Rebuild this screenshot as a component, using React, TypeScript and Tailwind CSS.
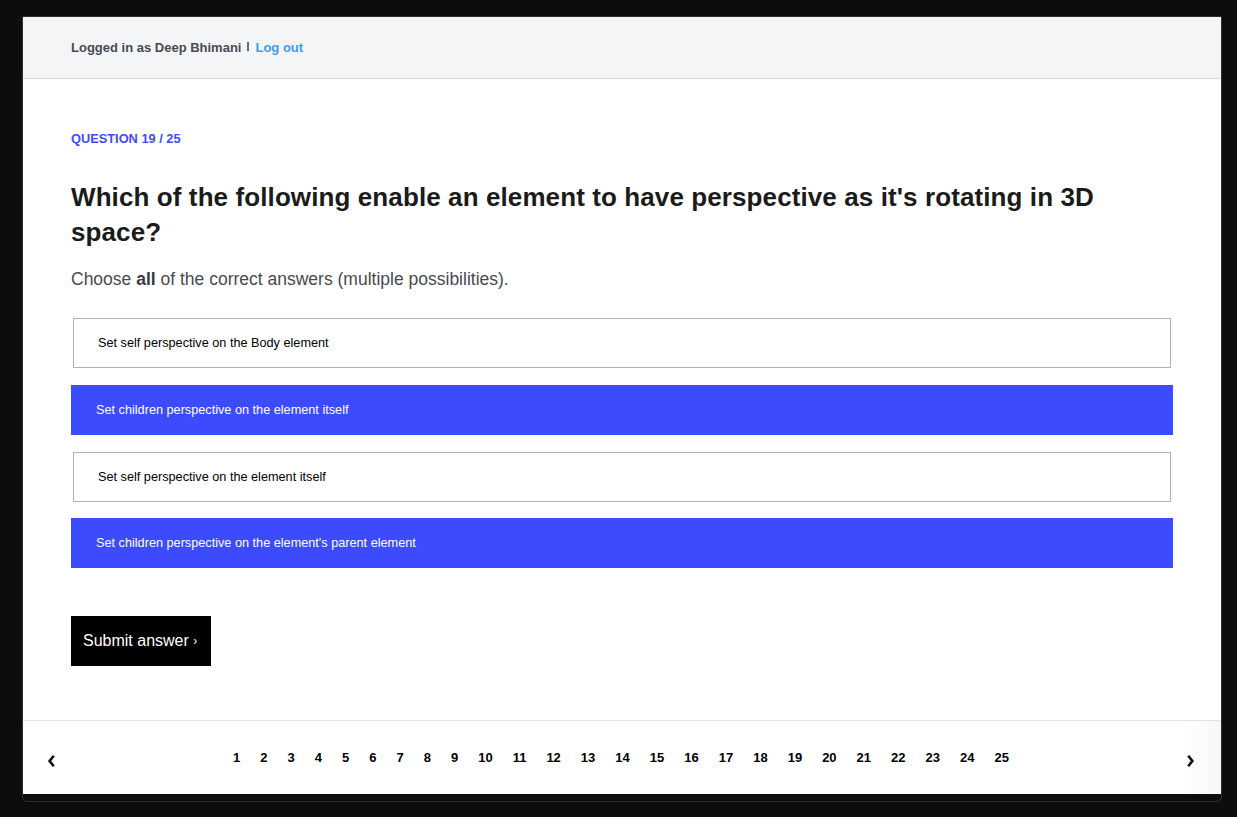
import React from "react";

const options = [
  { text: "Set self perspective on the Body element", selected: false },
  { text: "Set children perspective on the element itself", selected: true },
  { text: "Set self perspective on the element itself", selected: false },
  { text: "Set children perspective on the element's parent element", selected: true },
];

function Chevron({ dir }: { dir: "left" | "right" }) {
  return (
    <svg width="9" height="14" viewBox="0 0 9 14" fill="none">
      {dir === "left" ? (
        <path d="M6.8 1.8 L2.6 7 L6.8 12.2" stroke="#111" strokeWidth="2.6" strokeLinejoin="miter" />
      ) : (
        <path d="M2.2 1.8 L6.4 7 L2.2 12.2" stroke="#111" strokeWidth="2.6" strokeLinejoin="miter" />
      )}
    </svg>
  );
}

export default function App() {
  const nums = Array.from({ length: 25 }, (_, i) => i + 1);
  return (
    <div
      className="w-full h-[817px] bg-[#0d0d0d] pt-[16px] pl-[22px] overflow-hidden"
      style={{ fontFamily: '"Liberation Sans", Arial, sans-serif' }}
    >
      <div className="w-[1200px] border border-[#2f2f2f] rounded-b-[5px] pb-[7px] bg-[#0d0d0d]">
        <div className="bg-white">
          <header className="h-[62px] bg-[#f4f5f7] border-b border-[#d7d9dc] pl-[48px] flex items-center">
            <span className="text-[13px] font-bold text-[#4a4a52]">Logged in as Deep Bhimani</span>
            <span className="ml-[6px] mb-[3px] w-[2px] h-[9px] bg-[#6b6b72]" />
            <span className="ml-[6px] text-[13px] font-bold text-[#3b9cf6]">Log out</span>
          </header>
          <main className="pl-[48px] pr-[48px] pt-[53px] pb-[54px]">
            <div className="text-[12.8px] font-bold text-[#3d4bff] leading-[14px]">
              QUESTION 19 / 25
            </div>
            <h1 className="mt-[34px] text-[26px] font-bold leading-[35px] text-[#1b1b1b] pr-[70px] tracking-[0.1px]">
              Which of the following enable an element to have perspective as it's rotating in 3D space?
            </h1>
            <p className="mt-[17px] text-[17.5px] leading-[24px] text-[#4a4a4f]">
              Choose <b className="text-[#3a3a3f]">all</b> of the correct answers (multiple possibilities).
            </p>
            <div className="mt-[27px] flex flex-col">
              {options.map((o, i) =>
                o.selected ? (
                  <div
                    key={o.text}
                    className={`h-[50px] bg-[#3d4bff] text-white text-[12.7px] flex items-center pl-[25px] pt-[2px] ${i === 3 ? "mt-[16px]" : "mt-[17px]"}`}
                  >
                    {o.text}
                  </div>
                ) : (
                  <div
                    key={o.text}
                    className={`mx-[2px] h-[50px] border border-[#b3b3b3] bg-white text-black text-[12.7px] flex items-center pl-[24px] pt-[2px] ${i === 0 ? "mt-0" : "mt-[17px]"}`}
                  >
                    {o.text}
                  </div>
                )
              )}
            </div>
            <button className="mt-[48px] h-[50px] w-[140px] bg-black text-white text-[16px] text-left pl-[12px]">
              Submit answer <span className="text-[12px] relative top-[-1px]">›</span>
            </button>
          </main>
          <footer className="h-[74px] border-t border-[#dfe4ea] flex items-center justify-between pl-[24px] pr-[26px] bg-[linear-gradient(to_right,#ffffff_0%,#ffffff_97%,#f7f7f7_100%)]">
            <span className="mt-[6px] w-[9px] flex justify-center">
              <Chevron dir="left" />
            </span>
            <div className="flex gap-[20px] text-[13px] font-bold text-black">
              {nums.map((n) => (
                <span key={n}>{n}</span>
              ))}
            </div>
            <span className="mt-[6px] w-[9px] flex justify-center">
              <Chevron dir="right" />
            </span>
          </footer>
        </div>
      </div>
    </div>
  );
}
